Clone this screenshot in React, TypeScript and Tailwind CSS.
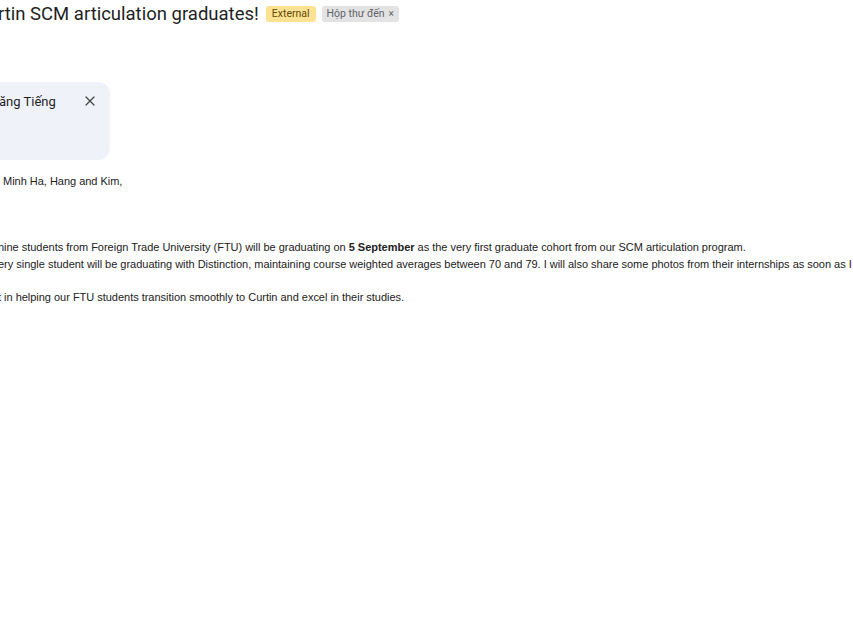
import { X } from "lucide-react";

function Badge({ label, tone, close }: { label: string; tone: "yellow" | "gray"; close?: boolean }) {
  const colors = tone === "yellow" ? "bg-[#fde293] text-[#5f4a07] px-[6px]" : "bg-[#e3e3e3] text-[#5f6368] px-[5px]";
  return (
    <span className={`inline-flex items-center gap-1 h-[16px] rounded-[3px] text-[10.5px] leading-none ${colors}`}>
      {label}
      {close && <span className="text-[10px] leading-none">×</span>}
    </span>
  );
}

export default function App() {
  return (
    <div className="w-[853px] h-[640px] overflow-hidden bg-white">
      {/* subject row */}
      <div className="flex items-center h-[28px] -ml-[2px] font-['Roboto',sans-serif]">
        <h1 className="text-[18.5px] text-[#1f1f1f] whitespace-nowrap leading-none">rtin SCM articulation graduates!</h1>
        <div className="flex items-center gap-[6px] ml-[7px]">
          <Badge label="External" tone="yellow" />
          <Badge label="Hộp thư đến" tone="gray" close />
        </div>
      </div>

      {/* translate card */}
      <div className="mt-[54px] w-[110px] h-[78px] bg-[#f0f2f9] rounded-r-[12px] pr-[12px] pt-[10px] flex items-start justify-between font-['Roboto',sans-serif]">
        <span className="text-[13px] text-[#1f1f1f] whitespace-nowrap -ml-[1px]">ăng Tiếng</span>
        <X className="w-[16px] h-[16px] text-[#444746] mt-[1px]" strokeWidth={1.8} />
      </div>

      {/* body */}
      <div className="font-['Liberation_Sans',Arial,sans-serif] text-[11px] tracking-[-0.02px] leading-[17px] text-[#222] whitespace-nowrap">
        <p className="mt-[13px] ml-[3px]">Minh Ha, Hang and Kim,</p>
        <p className="mt-[49px] -ml-[2px]">
          nine students from Foreign Trade University (FTU) will be graduating on <b>5 September</b> as the very first graduate cohort from our SCM articulation program.
        </p>
        <p className="-ml-[2px]">
          ery single student will be graduating with Distinction, maintaining course weighted averages between 70 and 79. I will also share some photos from their internships as soon as I
        </p>
        <p className="mt-[16px] -ml-[2px]">t in helping our FTU students transition smoothly to Curtin and excel in their studies.</p>
      </div>
    </div>
  );
}
